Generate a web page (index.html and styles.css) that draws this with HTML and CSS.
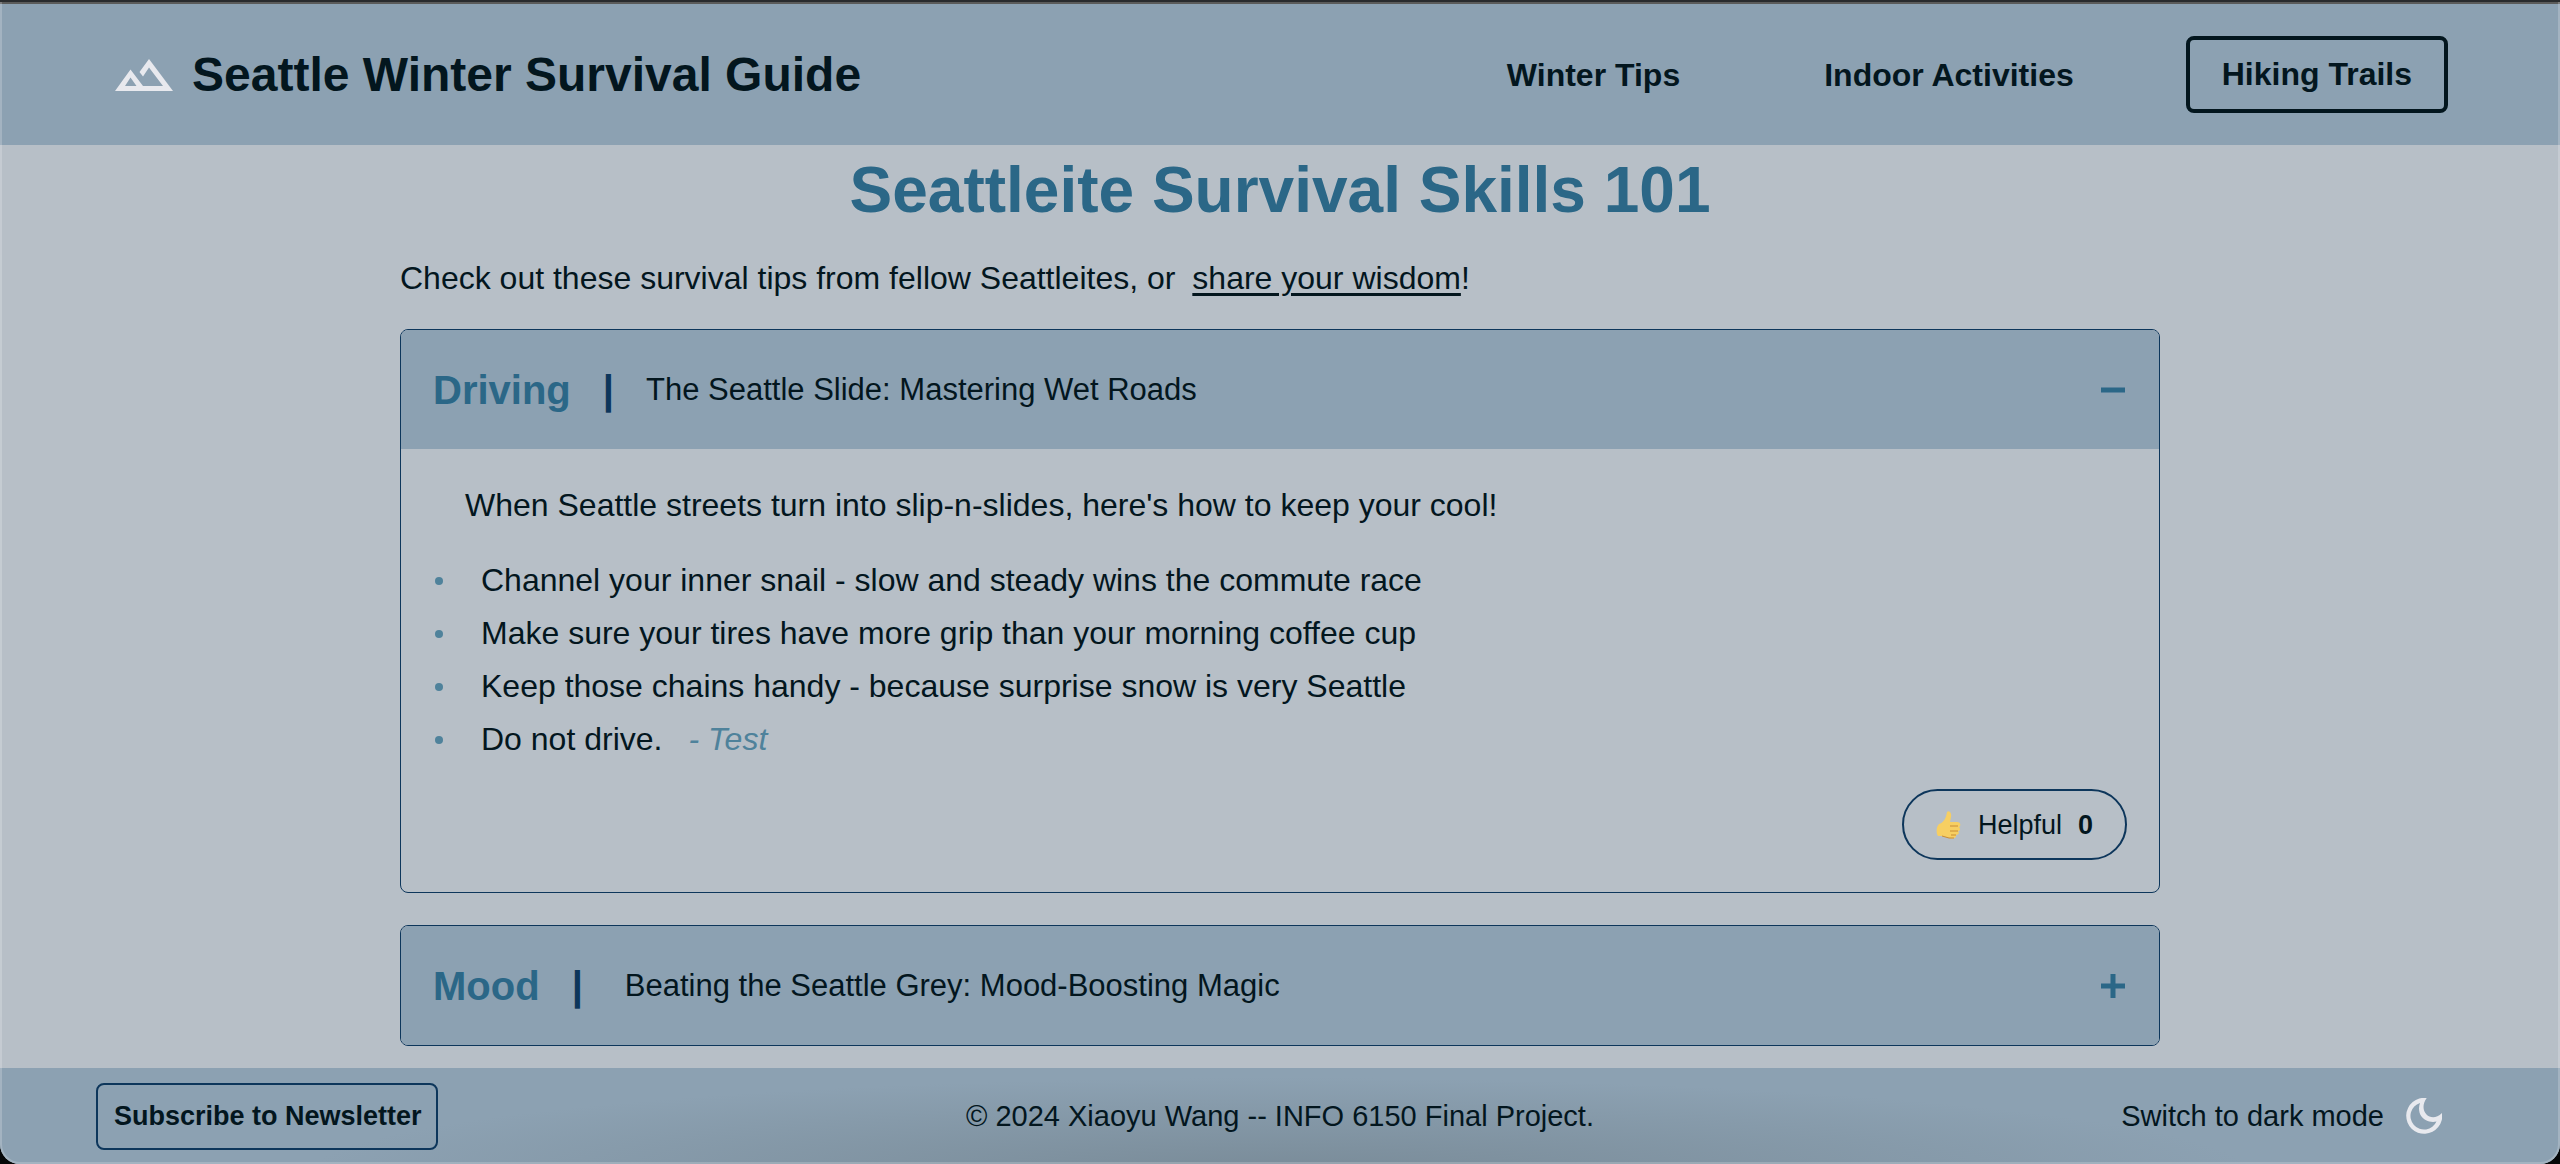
FILE: index.html
```html
<!DOCTYPE html>
<html lang="en">
<head>
<meta charset="utf-8">
<title>Seattle Winter Survival Guide</title>
<link rel="stylesheet" href="styles.css">
</head>
<body>
<div class="window">
  <header class="site-header">
    <div class="brand">
      <svg class="brand-icon" viewBox="0 0 58 32" aria-hidden="true"><path fill="#e8e9ee" fill-rule="evenodd" d="M0 32 15.500 10.500 28 27H48L34 8.500 28 17.500 24.500 13 34 0 58 32ZM10 27H21.500L15.500 18.500Z"/></svg>
      <span class="brand-name">Seattle Winter Survival Guide</span>
    </div>
    <nav class="site-nav">
      <a class="nav-link" href="#tips">Winter Tips</a>
      <a class="nav-link" href="#indoor">Indoor Activities</a>
      <a class="nav-link nav-link-boxed" href="#hiking">Hiking Trails</a>
    </nav>
  </header>
  <main class="content">
    <h1 class="page-title">Seattleite Survival Skills 101</h1>
    <p class="intro">Check out these survival tips from fellow Seattleites, or <a class="intro-link" href="#share">share your wisdom</a>!</p>
    <section class="card">
      <button class="card-header" aria-expanded="true">
        <span class="category">Driving</span><span class="divider">|</span><span class="card-title">The Seattle Slide: Mastering Wet Roads</span>
        <svg class="toggle" viewBox="0 0 24 24" aria-hidden="true"><path d="M0 12H24"/></svg>
      </button>
      <div class="card-body">
        <p class="lead">When Seattle streets turn into slip-n-slides, here's how to keep your cool!</p>
        <ul class="tips">
          <li class="tip">Channel your inner snail - slow and steady wins the commute race</li>
          <li class="tip">Make sure your tires have more grip than your morning coffee cup</li>
          <li class="tip">Keep those chains handy - because surprise snow is very Seattle</li>
          <li class="tip">Do not drive. <em class="author">- Test</em></li>
        </ul>
        <div class="actions">
          <button class="helpful"><svg class="thumb" viewBox="0 0 26 28" aria-hidden="true"><path fill="#f7cf62" d="M11 1C13-1 16 2 15 6L14 11H21C25 11 25 15 23 16 25 18 24 20 22 20 24 22 22 24 20 24 21 27 17 28 13 27L6 25H2C0 22 0 16 3 13 7 12 10 8 11 1Z"/><path fill="none" stroke="#c98c35" d="M14 15H22M14 20H22M15 24H20M6 25 13 27H18"/></svg><span>Helpful</span><strong>0</strong></button>
        </div>
      </div>
    </section>
    <section class="card">
      <button class="card-header" aria-expanded="false">
        <span class="category">Mood</span><span class="divider">|</span><span class="card-title card-title-spaced">Beating the Seattle Grey: Mood-Boosting Magic</span>
        <svg class="toggle" viewBox="0 0 24 24" aria-hidden="true"><path d="M0 12H24M12 0V24"/></svg>
      </button>
    </section>
  </main>
  <footer class="site-footer">
    <button class="subscribe">Subscribe to Newsletter</button>
    <p class="copyright">© 2024 Xiaoyu Wang -- INFO 6150 Final Project.</p>
    <button class="mode">Switch to dark mode <svg class="moon" viewBox="0 0 36 36" aria-hidden="true"><path fill="#e8e9ee" fill-rule="evenodd" d="M20.700 0A18 18 0 1 0 36 15C30 21 24 20 20.500 16.500 16.500 12 16.500 6 20.700 0ZM14 5A13.600 13.600 0 1 0 30.500 23.500C24 25 18 22 15.500 18.500 12.500 14.500 12.500 9 14 5Z"/></svg></button>
  </footer>
</div>
</body>
</html>
```
FILE: styles.css
```css
* { box-sizing: border-box; }
html { background: #050708; }
body { margin: 0; font-family: "Liberation Sans", Arial, sans-serif; font-size: 32px; line-height: 36px; color: #03161e; }
h1, p, ul { margin: 0; padding: 0; }
a { color: inherit; }
button { font: inherit; color: inherit; background: none; border: 0; padding: 0; }

.window { position: relative; min-height: 100vh; display: flex; flex-direction: column; background: #b7bfc7; border-top: 2px solid #292b2d; border-radius: 0 0 20px 20px; overflow: hidden; }
/* light rim of the window, drawn over the bars */
.window::after { content: ""; position: absolute; inset: 0; border: 2px solid #ffffff33; border-width: 0 2px 2px; border-radius: 0 0 20px 20px; pointer-events: none; }

.site-header { display: flex; align-items: center; justify-content: space-between; height: 143px; padding: 0 112px 0 115px; border-top: 2px solid #5b5b5a; background: #8ca1b2; }
.brand { display: flex; align-items: center; gap: 19px; }
.brand-icon { width: 58px; height: 32px; }
.brand-name { font-size: 48px; line-height: 56px; font-weight: bold; }
.site-nav { display: flex; align-items: center; gap: 80px; font-weight: bold; }
.nav-link { text-decoration: none; padding: 0 32px; }
.nav-link-boxed { border: 4px solid #03161e; border-radius: 8px; padding: 16px 32px 17px; }

.content { flex: 1; width: 1760px; max-width: 90%; margin: 0 auto; padding-bottom: 22px; }
.page-title { font-size: 64px; line-height: 90px; text-align: center; color: #2b6787; }
.intro { margin: 25px 0 33px; }
.intro-link { margin-left: 8px; text-underline-offset: 4px; text-decoration-thickness: 3px; }

.card { border: 1px solid #0d365b; border-radius: 8px; overflow: hidden; }
.card + .card { margin-top: 32px; }
.card-header { display: flex; align-items: center; width: 100%; height: 119px; padding: 0 34px 0 32px; background: #8ca1b2; text-align: left; }
.category { font-size: 40px; font-weight: bold; color: #2b6787; }
.divider { font-size: 40px; font-weight: bold; color: #0d365b; margin: 0 32px; }
.card-title { font-size: 31px; }
.card-title-spaced { margin-left: 10px; }
.toggle { width: 24px; height: 24px; margin-left: auto; fill: none; stroke: #2b6787; stroke-width: 5; }

.card-body { padding: 38px 32px 32px; }
.lead { padding-left: 32px; }
.tips { list-style: none; margin-top: 31px; }
.tip { display: flex; align-items: center; line-height: 53px; }
.tip::before { content: ""; width: 8px; height: 8px; margin: 0 38px 0 2px; border-radius: 50%; background: #4f829b; }
.author { margin-left: 26px; color: #4f829b; }
.actions { display: flex; justify-content: flex-end; margin-top: 23px; }
.helpful { display: flex; align-items: center; gap: 16px; height: 71px; padding: 0 32px; border: 2px solid #0d365b; border-radius: 36px; font-size: 27px; }
.thumb { width: 26px; height: 28px; }

.site-footer { display: grid; grid-template-columns: 1fr auto 1fr; align-items: center; height: 96px; padding: 0 96px; background: radial-gradient(ellipse 38% 100% at 50% 110%, #798b98, #8ca1b200) #8ca1b2; }
.subscribe { justify-self: start; height: 67px; padding: 0 14px 0 16px; border: 2px solid #0d365b; border-radius: 8px; font-size: 27px; font-weight: bold; }
.copyright, .mode { font-size: 29px; }
.mode { justify-self: end; display: flex; align-items: center; gap: 22px; margin-right: 22px; }
.moon { width: 36px; height: 36px; }
```
